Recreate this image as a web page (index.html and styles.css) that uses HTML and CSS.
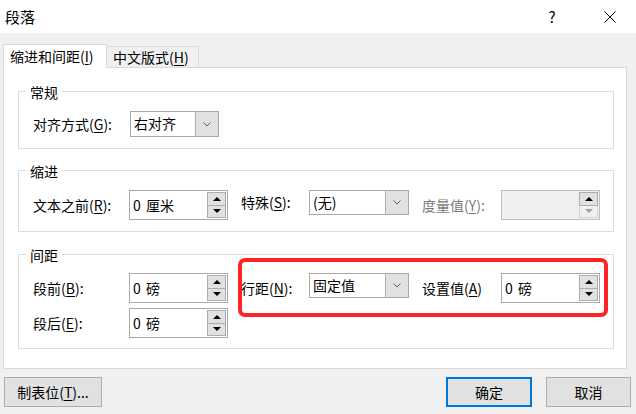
FILE: index.html
```html
<!DOCTYPE html>
<html lang="zh-CN">
<head>
<meta charset="utf-8">
<title>段落</title>
<link rel="stylesheet" href="styles.css">
</head>
<body>
<div class="titlebar">
  <span class="title">段落</span>
  <span class="help">?</span>
  <span class="close"><svg width="12" height="12" viewBox="0 0 12 12"><path d="M0.5 0.5 L11.5 11.5 M11.5 0.5 L0.5 11.5" stroke="#000" stroke-width="1" fill="none"/></svg></span>
</div>
<div class="tabs">
  <div class="tab active">缩进和间距(<u>I</u>)</div>
  <div class="tab second">中文版式(<u>H</u>)</div>
</div>
<div class="panel">
  <div class="group g1">
    <div class="legend">常规</div>
    <div class="rows grid1">
      <span class="label lh26">对齐方式(<u>G</u>):</span>
      <div class="select h26"><span class="value">右对齐</span><span class="drop"><svg width="8" height="5" viewBox="0 0 8 5"><polyline points="0.5,0.5 4,4 7.5,0.5" fill="none" stroke="#606060" stroke-width="1"/></svg></span></div>
    </div>
  </div>
  <div class="group g2">
    <div class="legend">缩进</div>
    <div class="rows grid">
      <span class="label">文本之前(<u>R</u>):</span>
      <div class="spin"><span class="value">0 厘米</span><span class="btns"><span class="sb up"><i class="tri-up"></i></span><span class="sb down"><i class="tri-down"></i></span></span></div>
      <span class="label l2 lh25">特殊(<u>S</u>):</span>
      <div class="select"><span class="value">(无)</span><span class="drop"><svg width="8" height="5" viewBox="0 0 8 5"><polyline points="0.5,0.5 4,4 7.5,0.5" fill="none" stroke="#606060" stroke-width="1"/></svg></span></div>
      <span class="label l3 disabled-text">度量值(<u>Y</u>):</span>
      <div class="spin disabled"><span class="value"></span><span class="btns"><span class="sb up"><i class="tri-up"></i></span><span class="sb down off"><i class="tri-down"></i></span></span></div>
    </div>
  </div>
  <div class="group g3">
    <div class="legend">间距</div>
    <div class="rows grid grid3">
      <span class="label">段前(<u>B</u>):</span>
      <div class="spin"><span class="value">0 磅</span><span class="btns"><span class="sb up"><i class="tri-up"></i></span><span class="sb down"><i class="tri-down"></i></span></span></div>
      <span class="label l2">行距(<u>N</u>):</span>
      <div class="select"><span class="value">固定值</span><span class="drop"><svg width="8" height="5" viewBox="0 0 8 5"><polyline points="0.5,0.5 4,4 7.5,0.5" fill="none" stroke="#606060" stroke-width="1"/></svg></span></div>
      <span class="label l3">设置值(<u>A</u>)</span>
      <div class="spin"><span class="value">0 磅</span><span class="btns"><span class="sb up"><i class="tri-up"></i></span><span class="sb down"><i class="tri-down"></i></span></span></div>
      <span class="label">段后(<u>E</u>):</span>
      <div class="spin"><span class="value">0 磅</span><span class="btns"><span class="sb up"><i class="tri-up"></i></span><span class="sb down"><i class="tri-down"></i></span></span></div>
    </div>
  </div>
</div>
<div class="footer">
  <div class="btn tabstop">制表位(<u>T</u>)...</div>
  <div class="btn ok">确定</div>
  <div class="btn cancel">取消</div>
</div>
<div class="highlight"></div>
</body>
</html>
```
FILE: styles.css
```css
* { box-sizing: border-box; }
html, body { margin: 0; padding: 0; }
body {
  width: 636px;
  height: 414px;
  overflow: hidden;
  position: relative;
  background: #f0f0f0;
  font-family: "Noto Sans CJK SC", "Microsoft YaHei", sans-serif;
  font-size: 14px;
  color: #000;
}
u { text-decoration: underline; text-underline-offset: 2px; text-decoration-thickness: 1px; }

.titlebar {
  height: 33px;
  background: #fff;
  display: flex;
  align-items: center;
}
.title { flex: 1; margin-left: 5px; font-size: 15px; line-height: 30px; }
.help { width: 58px; text-align: center; font-size: 15px; line-height: 30px; }
.close { width: 55px; display: flex; padding-left: 23px; }
.close svg { display: block; }

.tabs {
  height: 34px;
  display: flex;
  align-items: flex-end;
  padding-left: 3px;
}
.tab {
  height: 21px;
  border: 1px solid #d9d9d9;
  border-bottom: none;
  border-left: none;
  padding-left: 6px;
  line-height: 20px;
  background: #f0f0f0;
  white-space: nowrap;
}
.tab.second { width: 92px; }
.tab.active {
  width: 104px;
  height: 24px;
  margin-bottom: -1px;
  border-left: 1px solid #d9d9d9;
  background: #fff;
  line-height: 22px;
  position: relative;
  z-index: 1;
}

.panel {
  margin-left: 3px;
  width: 624px;
  height: 302px;
  background: #fff;
  border: 1px solid #d9d9d9;
  padding: 23px 12px 0 14px;
}
.group {
  border: 1px solid #dcdcdc;
  padding: 0 0 11px 14px;
}
.g2 { margin-top: 21px; }
.g3 { margin-top: 22px; padding-bottom: 10px; }
.legend {
  width: max-content;
  margin: -9px 0 0 -7px;
  padding: 0 4px;
  background: #fff;
  line-height: 18px;
}
.rows { margin-top: 10px; }
.g3 .rows { margin-top: 9px; }

.grid1 {
  display: grid;
  grid-template-columns: 97px 89px;
  align-items: start;
}
.grid {
  display: grid;
  grid-template-columns: 96px 99px 81px 100px 92px 99px;
  grid-auto-rows: 30px;
  row-gap: 5px;
  align-items: start;
}
.label { line-height: 30px; white-space: nowrap; }
.lh26 { line-height: 26px; }
.lh25 { line-height: 25px; }
.l2 { padding-left: 13px; }
.l3 { padding-left: 13px; }
.disabled-text { color: #7a7a7a; }

.select {
  height: 25px;
  border: 1px solid #a9a9a9;
  background: #fff;
  display: flex;
}
.select.h26 { height: 26px; }
.select .value { flex: 1; padding-left: 3px; line-height: 23px; white-space: nowrap; }
.drop {
  width: 23px;
  background: #e1e1e1;
  border-left: 1px solid #adadad;
  display: flex;
  align-items: center;
  justify-content: center;
}
.drop svg { display: block; }

.spin {
  height: 30px;
  border: 1px solid #a9a9a9;
  background: #fff;
  display: flex;
  align-items: center;
}
.spin .value { flex: 1; padding-left: 3px; white-space: pre; line-height: 26px; word-spacing: 2px; }
.btns {
  width: 19px;
  height: 26px;
  margin-right: 1px;
  display: flex;
  flex-direction: column;
}
.sb {
  flex: 1;
  background: #e1e1e1;
  border: 1px solid #adadad;
  display: flex;
  align-items: center;
  justify-content: center;
}
.sb.down { border-top: none; }
.tri-up {
  width: 0; height: 0;
  border-left: 4px solid transparent;
  border-right: 4px solid transparent;
  border-bottom: 4px solid #000;
}
.tri-down {
  width: 0; height: 0;
  border-left: 4px solid transparent;
  border-right: 4px solid transparent;
  border-top: 4px solid #000;
}
.spin.disabled { background: #f0f0f0; border-color: #bfbfbf; }
.sb.off { background: #f0f0f0; border-color: #d4d4d4; }
.sb.off .tri-down { border-top-color: #a0a0a0; }

.footer {
  display: flex;
  margin-top: 8px;
  padding: 0 5px 0 4px;
}
.btn {
  height: 30px;
  border: 1px solid #adadad;
  background: #e1e1e1;
  display: flex;
  align-items: center;
  justify-content: center;
  white-space: nowrap;
}
.tabstop { width: 98px; }
.ok { width: 86px; margin-left: auto; border: 2px solid #0078d7; }
.cancel { width: 85px; margin-left: 14px; }

.highlight {
  position: absolute;
  left: 238px;
  top: 258px;
  width: 370px;
  height: 59px;
  border: 4px solid #ff2424;
  border-radius: 7px;
  pointer-events: none;
}
```
